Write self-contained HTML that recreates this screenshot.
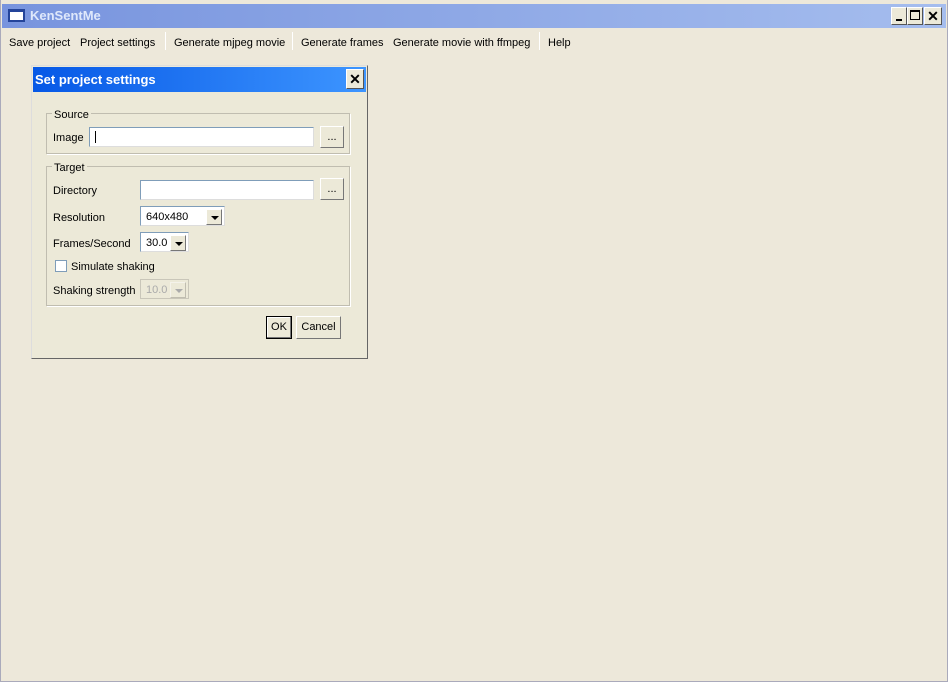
<!DOCTYPE html>
<html><head><style>
*{margin:0;padding:0;box-sizing:border-box}
body{width:948px;height:682px;background:#ece9d8;font-family:"Liberation Sans",sans-serif;font-size:11px;color:#000;position:relative;overflow:hidden}
.a{position:absolute}
.t{padding-top:1px}
.outer{left:0;top:0;width:948px;height:682px;border:1px solid #aab;border-top:none;background:#ede8da}
.tb{left:2px;top:4px;width:944px;height:24px;background:linear-gradient(90deg,#7894de,#a5bdee)}
.tt{left:30px;top:8px;color:#dfe8fb;font-weight:bold;font-size:13px}
.wb{width:16px;height:18px;top:7px;background:#ece9d8;border:1px solid;border-color:#fff #555 #555 #fff}
.menu span{position:absolute;top:37px}
.sep{top:32px;width:1px;height:18px;background:#bbb;border-right:1px solid #fff}
.dlg{left:31px;top:65px;width:337px;height:294px;background:#ece9d8;border:1px solid;border-color:#ddd #666 #666 #ddd}
.dt{left:33px;top:67px;width:333px;height:25px;background:linear-gradient(90deg,#0658e6,#3d95ff)}
.dtt{left:35px;top:72px;color:#fff;font-weight:bold;font-size:13px}
.fs{border:1px solid #c0bdb0;box-shadow:1px 1px 0 #fff}
.lg{background:#ece9d8;padding:1px 2px 0}
.inp{background:#fff;border:1px solid;border-color:#7f9db9 #ddd #ddd #7f9db9;height:20px}
.btn{background:#ece9d8;border:1px solid;border-color:#fff #777 #777 #fff;text-align:center;line-height:20px}
.dd{width:16px;height:16px;top:2px;right:2px;position:absolute;background:#ece9d8;border:1px solid;border-color:#fff #777 #777 #fff}
.dd:after{content:"";position:absolute;left:4px;top:6px;border:4px solid transparent;border-top:4px solid #000;border-bottom:none}
.dis .dd:after{border-top-color:#aaa}
</style></head><body>
<div class="a outer"></div>
<div class="a tb"></div>
<div class="a" style="left:8px;top:9px;width:17px;height:13px;background:#fff;border:2px solid #24449a;border-top-width:3px"></div>
<div class="a tt">KenSentMe</div>
<div class="a wb" style="left:891px"><div class="a" style="left:4px;top:11px;width:6px;height:2px;background:#000"></div></div>
<div class="a wb" style="left:907px"><div class="a" style="left:2px;top:2px;width:10px;height:10px;border:1px solid #000;border-top-width:2px"></div></div>
<div class="a wb" style="left:924px;width:18px;font-weight:bold;font-size:14px;text-align:center;line-height:16px">✕</div>
<div class="menu">
<span style="left:9px">Save project</span>
<span style="left:80px">Project settings</span>
<span style="left:174px">Generate mjpeg movie</span>
<span style="left:301px">Generate frames</span>
<span style="left:393px">Generate movie with ffmpeg</span>
<span style="left:548px">Help</span>
</div>
<div class="a sep" style="left:165px"></div>
<div class="a sep" style="left:292px"></div>
<div class="a sep" style="left:539px"></div>

<div class="a dlg"></div>
<div class="a dt"></div>
<div class="a dtt">Set project settings</div>
<div class="a" style="left:346px;top:69px;width:18px;height:20px;background:#ece9d8;border:1px solid;border-color:#fff #555 #555 #fff;font-weight:bold;font-size:14px;text-align:center;line-height:18px">✕</div>

<div class="a fs" style="left:46px;top:113px;width:304px;height:41px"></div>
<div class="a lg" style="left:52px;top:108px">Source</div>
<div class="a t" style="left:53px;top:131px">Image</div>
<div class="a inp" style="left:89px;top:127px;width:225px"><div class="a" style="left:5px;top:3px;width:1px;height:12px;background:#000"></div></div>
<div class="a btn" style="left:320px;top:126px;width:24px;height:22px">...</div>

<div class="a fs" style="left:46px;top:166px;width:304px;height:140px"></div>
<div class="a lg" style="left:52px;top:161px">Target</div>
<div class="a t" style="left:53px;top:184px">Directory</div>
<div class="a inp" style="left:140px;top:180px;width:174px"></div>
<div class="a btn" style="left:320px;top:178px;width:24px;height:22px">...</div>
<div class="a t" style="left:53px;top:211px">Resolution</div>
<div class="a inp" style="left:140px;top:206px;width:85px"><span class="a t" style="left:5px;top:3px">640x480</span><div class="dd"></div></div>
<div class="a t" style="left:53px;top:237px">Frames/Second</div>
<div class="a inp" style="left:140px;top:232px;width:49px"><span class="a t" style="left:5px;top:3px">30.0</span><div class="dd"></div></div>
<div class="a" style="left:55px;top:260px;width:12px;height:12px;background:#fff;border:1px solid #7f9db9"></div>
<div class="a t" style="left:71px;top:260px">Simulate shaking</div>
<div class="a t" style="left:53px;top:284px">Shaking strength</div>
<div class="a inp dis" style="left:140px;top:279px;width:49px;background:#ece9d8;border-color:#c9c6b9"><span class="a t" style="left:5px;top:3px;color:#aaa">10.0</span><div class="dd" style="border-color:#f4f2ea #c0bdb0 #c0bdb0 #f4f2ea"></div></div>
<div class="a btn" style="left:266px;top:316px;width:26px;height:23px;border:1px solid #000;box-shadow:inset -1px -1px #777,inset 1px 1px #fff">OK</div>
<div class="a btn" style="left:296px;top:316px;width:45px;height:23px">Cancel</div>
</body></html>
